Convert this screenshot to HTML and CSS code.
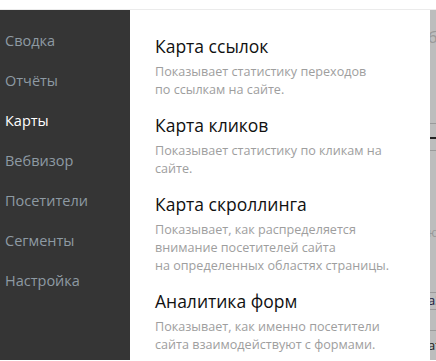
FILE: index.html
```
<!DOCTYPE html>
<html lang="ru">
<head>
<meta charset="utf-8">
<link rel="stylesheet" href="styles.css">
</head>
<body>
<div class="topbar"></div>
<div class="main">
  <nav class="side">
    <div class="item">Сводка</div>
    <div class="item">Отчёты</div>
    <div class="item active">Карты</div>
    <div class="item">Вебвизор</div>
    <div class="item">Посетители</div>
    <div class="item">Сегменты</div>
    <div class="item">Настройка</div>
  </nav>
  <section class="panel">
    <div class="entry">
      <div class="title">Карта ссылок</div>
      <div class="desc">Показывает статистику переходов<br>по ссылкам на сайте.</div>
    </div>
    <div class="entry">
      <div class="title">Карта кликов</div>
      <div class="desc">Показывает статистику по кликам на<br>сайте.</div>
    </div>
    <div class="entry">
      <div class="title">Карта скроллинга</div>
      <div class="desc">Показывает, как распределяется<br>внимание посетителей сайта<br>на определенных областях страницы.</div>
    </div>
    <div class="entry">
      <div class="title">Аналитика форм</div>
      <div class="desc">Показывает, как именно посетители<br>сайта взаимодействуют с формами.</div>
    </div>
  </section>
  <aside class="behind">
    <div class="b-char c1">б</div>
    <div class="b-line l1"></div>
    <div class="b-line l2 accent"></div>
    <div class="b-line l3"></div>
    <div class="b-char c2">ю</div>
    <div class="b-line l4"></div>
    <div class="b-char c3">а3</div>
    <div class="b-line l5"></div>
    <div class="b-line l6"></div>
    <div class="b-char c4">ат</div>
  </aside>
</div>
</body>
</html>
```
FILE: styles.css
```
* { box-sizing: border-box; }
html, body { margin: 0; padding: 0; }
body { width: 436px; height: 361px; overflow: hidden; background: #fff; }
.topbar { height: 10px; border-bottom: 1px solid #ebebeb; background: #fff; }
.main { display: flex; height: 350px; }
.side {
  width: 130px; background: #353535;
  padding-top: 19px;
  font-family: "Open Sans", sans-serif; font-size: 14.5px;
}
.item { height: 40px; line-height: 24px; padding-left: 5px; color: #8e9aa3; }
.item.active { color: #fff; }
.panel {
  width: 300px; background: #fff;
  padding: 25px 0 0 25px;
  font-family: "Open Sans", sans-serif;
}
.entry { margin-bottom: 15px; }
.title { font-size: 17.5px; line-height: 22px; color: #111; margin-bottom: 6px; }
.desc { font-size: 12.6px; line-height: 18px; color: #9e9e9e; }
.behind { flex: 1; background: #bdbdbd; position: relative; font-family: "Open Sans", sans-serif; font-size: 13px; overflow: hidden; }
.b-char { position: absolute; left: -2px; color: #888; }
.c1 { top: 16px; font-size: 16px; color: #999; }
.c2 { top: 213px; color: #999; }
.c3 { top: 281px; color: #1a1a40; }
.c4 { top: 326px; color: #222; }
.b-line { position: absolute; left: 0; right: 0; height: 1px; background: #9a9a9a; }
.l1 { top: 113px; }
.l2 { top: 127px; background: #222; height: 2px; }
.l3 { top: 140px; }
.l4 { top: 282px; }
.l5 { top: 299px; }
.l6 { top: 320px; }
```
